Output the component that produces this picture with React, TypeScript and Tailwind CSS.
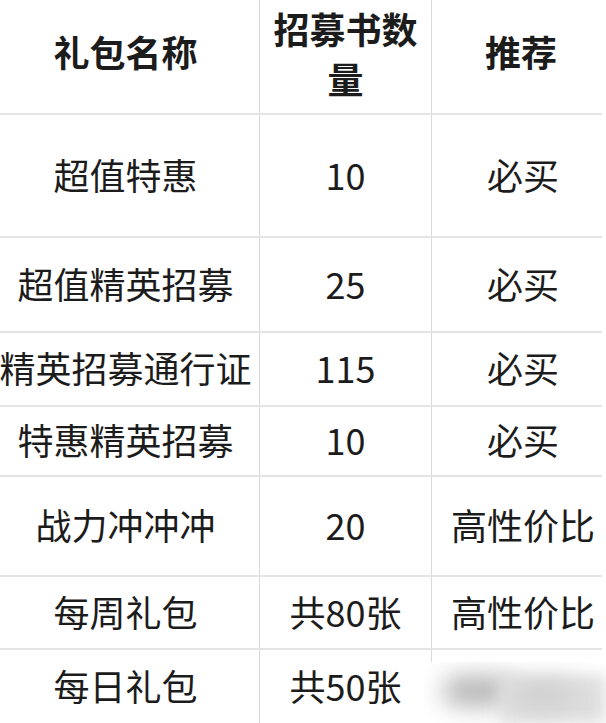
import React from 'react';

interface Row {
  name: string;
  count: string;
  rec: string;
  height: string;
}

const rows: Row[] = [
  { name: '超值特惠', count: '10', rec: '必买', height: 'h-[123px]' },
  { name: '超值精英招募', count: '25', rec: '必买', height: 'h-[95px]' },
  { name: '精英招募通行证', count: '115', rec: '必买', height: 'h-[74px]' },
  { name: '特惠精英招募', count: '10', rec: '必买', height: 'h-[70px]' },
  { name: '战力冲冲冲', count: '20', rec: '高性价比', height: 'h-[100px]' },
  { name: '每周礼包', count: '共80张', rec: '高性价比', height: 'h-[73px]' },
  { name: '每日礼包', count: '共50张', rec: '', height: 'h-[73px]' },
];

const cols = 'grid grid-cols-[260px_172px_170px]';

const App: React.FC = () => {
  return (
    <div className="relative w-[606px] h-[723px] overflow-hidden bg-white font-['Noto_Sans_CJK_SC',sans-serif] text-[#1c1c1c]">
      <div className="w-[602px]">
        {/* header */}
        <div className={`${cols} h-[115px] border-b-2 border-[#e4e4e4] text-[36px] font-bold leading-[50px]`}>
          <div className="flex items-center justify-center pr-2 pb-[12px] border-r border-[#dadada] whitespace-nowrap">
            礼包名称
          </div>
          <div className="flex items-center justify-center px-3 pb-[8px] text-center border-r border-[#dadada]">
            招募书数量
          </div>
          <div className="flex items-center justify-center pl-2 pb-[12px]">推荐</div>
        </div>

        {rows.map((row, i) => (
          <div
            key={i}
            className={`${cols} ${row.height} ${i < rows.length - 1 ? 'border-b-2 border-[#e4e4e4]' : ''} text-[36px] leading-none`}
          >
            <div className="flex items-center justify-center pr-2 pb-1 border-r border-[#dadada] whitespace-nowrap">
              {row.name}
            </div>
            <div className="flex items-center justify-center pb-1 border-r border-[#dadada] whitespace-nowrap">
              {row.count}
            </div>
            <div className="flex items-center justify-center pl-3 pb-1 whitespace-nowrap">{row.rec}</div>
          </div>
        ))}
      </div>

      {/* blurred watermark */}
      <div className="absolute left-[423px] top-[662px] w-[183px] h-[61px] bg-white overflow-hidden">
        <div className="absolute left-[20px] top-[14px] w-[70px] h-[30px] rounded-full bg-[#b4b4b4] blur-md" />
        <div className="absolute left-[77px] top-[13px] w-[106px] h-[48px] bg-[#dedede] blur-sm" />
        <div className="absolute left-[90px] top-[20px] w-[60px] h-[26px] rounded-full bg-[#cfcfcf] blur-md" />
      </div>
    </div>
  );
};

export default App;
